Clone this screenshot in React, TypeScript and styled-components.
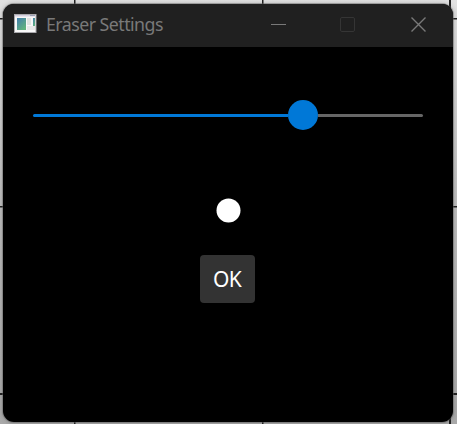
import React from "react";
import styled, { createGlobalStyle } from "styled-components";

const GlobalStyle = createGlobalStyle`
  *, *::before, *::after { box-sizing: border-box; }
  html, body { margin: 0; overflow: hidden; }
`;

const Desktop = styled.div`
  width: 457px;
  height: 424px;
  padding: 4px 4px 2px 3px;
  overflow: hidden;
  font-family: "Noto Sans", "Open Sans", sans-serif;
  background:
    linear-gradient(#222, #222) 0 18px / 100% 1.5px no-repeat,
    linear-gradient(#222, #222) 0 206px / 100% 1.5px no-repeat,
    linear-gradient(#222, #222) 0 393px / 100% 2px no-repeat,
    linear-gradient(#222, #222) 74px 0 / 1.5px 100% no-repeat,
    linear-gradient(#222, #222) 262px 0 / 1.5px 100% no-repeat,
    linear-gradient(#222, #222) 449px 0 / 2px 100% no-repeat,
    linear-gradient(#e2e2e2, #bdbdbd 50%, #a9a9a9);
`;

const Window = styled.main`
  height: 100%;
  display: flex;
  flex-direction: column;
  overflow: hidden;
  border-radius: 11px;
  background: #000;
  box-shadow: 0 0 0 1px rgba(100, 100, 100, 0.45), 0 0 4px 1px rgba(0, 0, 0, 0.18);
`;

const TitleBar = styled.header`
  flex: none;
  display: flex;
  align-items: center;
  height: 43px;
  padding: 0 0 3px 11px;
  background: #202020;
`;

const Title = styled.h1`
  flex: 1;
  margin: 0 0 0 9px;
  color: #797979;
  font-size: 17.8px;
  font-weight: 400;
  line-height: 40px;
  letter-spacing: -0.54px;
  white-space: nowrap;
`;

const Caption = styled.button<{ $muted?: boolean }>`
  width: 70px;
  height: 41px;
  padding: ${(p) => (p.$muted ? "0 2px 0 0" : "0")};
  border: 0;
  display: flex;
  align-items: center;
  justify-content: center;
  background: none;
  color: ${(p) => (p.$muted ? "#353535" : "#797979")};
`;

const Content = styled.section`
  flex: 1;
  display: flex;
  flex-direction: column;
  align-items: center;
  padding-top: 53px;
`;

const Slider = styled.div`
  width: 390px;
  height: 30px;
  display: flex;
  align-items: center;
`;

const Track = styled.div<{ $filled?: boolean }>`
  ${(p) => (p.$filled ? "width: 255px;" : "flex: 1;")}
  height: 3px;
  border-radius: ${(p) => (p.$filled ? "1.5px 0 0 1.5px" : "0 1.5px 1.5px 0")};
  background: ${(p) => (p.$filled ? "#0078d7" : "#666")};
`;

const Thumb = styled.div`
  width: 30px;
  height: 30px;
  border-radius: 50%;
  background: #0078d7;
`;

const BrushPreview = styled.svg`
  display: block;
  width: 25px;
  height: 25px;
  margin: 68px 0 32px;
  fill: #fff;
`;

const OkButton = styled.button`
  width: 55px;
  height: 48px;
  margin-right: 1px;
  padding: 0 1px 0 0;
  border: 0;
  border-radius: 4px;
  background: #333;
  color: #fff;
  font: 400 21px/49px "Noto Sans", "Open Sans", sans-serif;
  letter-spacing: -0.7px;
`;

const IconSvg = styled.svg`
  width: 23px;
  height: 19px;
  margin-bottom: 1px;
`;

const AppIcon = () => (
  <IconSvg viewBox="0 0 23 19">
    <defs>
      <linearGradient id="pane" x1="0" y1="0" x2="0.7" y2="1">
        <stop offset="0" stopColor="#427cae" />
        <stop offset="1" stopColor="#61b47d" />
      </linearGradient>
    </defs>
    <rect x="0.5" y="0.5" width="21.5" height="18" fill="#f8f8f8" stroke="#aaa9ad" />
    <rect x="1" y="1" width="20.5" height="1.5" fill="#d5cfdf" />
    <rect x="16" y="1" width="5" height="1" fill="#9ba0b5" />
    <rect x="3" y="4" width="9" height="12" fill="url(#pane)" />
    <rect x="13" y="4" width="4" height="7" fill="#e1e3e1" />
    <rect x="13" y="12" width="8" height="4" fill="#e8e8e8" />
    <rect x="19" y="4" width="2" height="8" fill="url(#pane)" />
  </IconSvg>
);

export default function App() {
  return (
    <>
      <GlobalStyle />
      <Desktop>
        <Window>
          <TitleBar>
            <AppIcon />
            <Title>Eraser Settings</Title>
            <Caption aria-label="Minimize">
              <svg width="15" height="15" fill="none" stroke="currentColor">
                <path d="M0 7.5h15" />
              </svg>
            </Caption>
            <Caption aria-label="Maximize" $muted>
              <svg width="15" height="15" fill="none" stroke="currentColor">
                <rect x="0.5" y="0.5" width="14" height="14" rx="1.5" />
              </svg>
            </Caption>
            <Caption aria-label="Close">
              <svg width="15" height="15" fill="none" stroke="currentColor" strokeWidth="1.4">
                <path d="M.5.5l14 14M14.5.5l-14 14" />
              </svg>
            </Caption>
          </TitleBar>
          <Content>
            <Slider role="slider" aria-label="Eraser size" aria-valuenow={70} aria-valuemin={0} aria-valuemax={100}>
              <Track $filled />
              <Thumb />
              <Track />
            </Slider>
            <BrushPreview viewBox="0 0 25 25">
              <circle cx="12.5" cy="12.5" r="12" />
            </BrushPreview>
            <OkButton>OK</OkButton>
          </Content>
        </Window>
      </Desktop>
    </>
  );
}
